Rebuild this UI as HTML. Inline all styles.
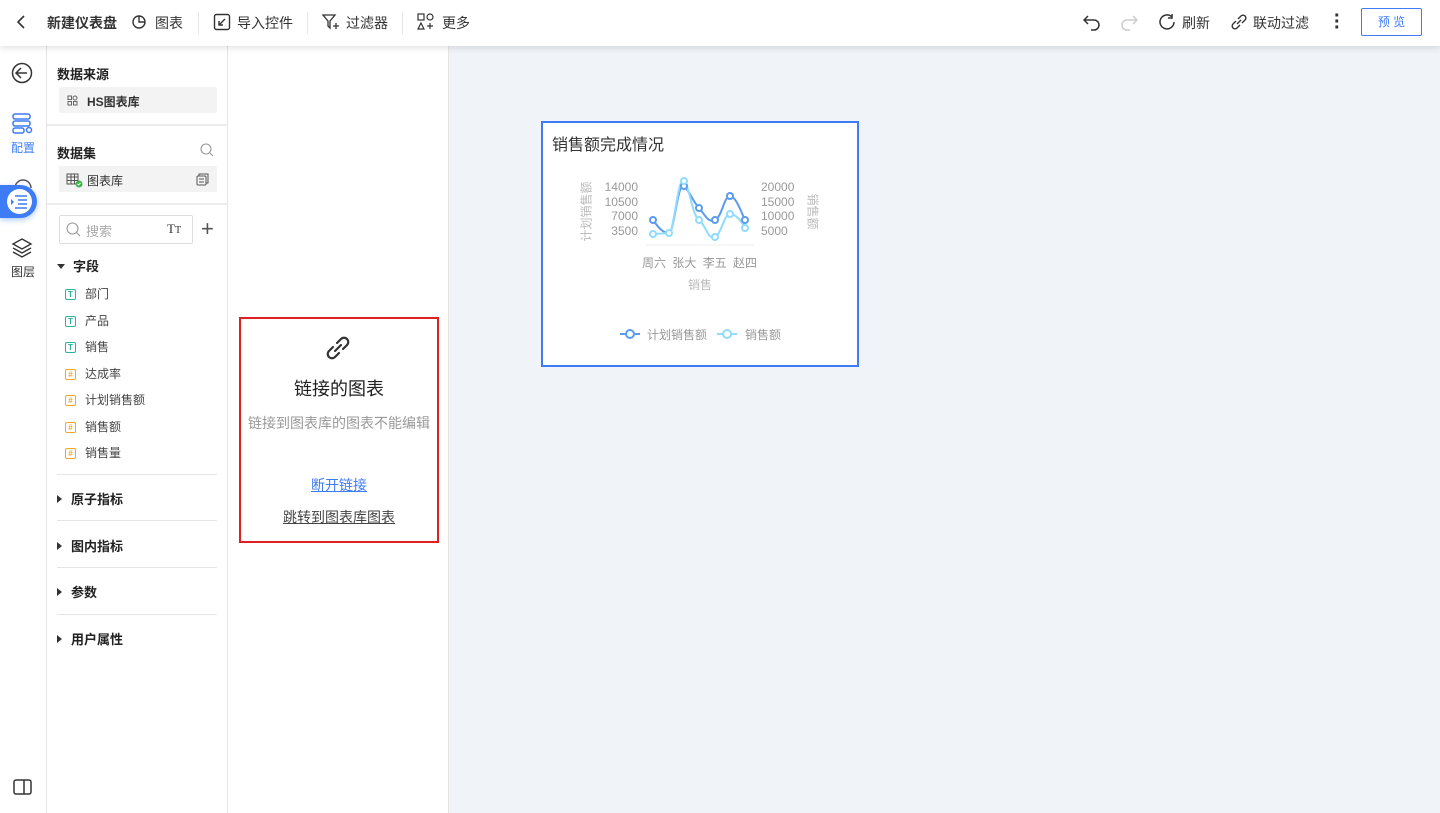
<!DOCTYPE html><html><head><meta charset="utf-8"><style>
*{box-sizing:border-box;margin:0;padding:0}
body{width:1440px;height:813px;overflow:hidden;font-family:"Liberation Sans","Noto Sans CJK SC",sans-serif;color:#333;background:#fff;position:relative;font-size:13px}
.a{position:absolute}
.top{left:0;top:0;width:1440px;height:46px;background:#fff;box-shadow:0 2px 6px rgba(0,0,0,.12);z-index:5}
.tb{top:13px;font-size:14px;color:#333;white-space:nowrap}
.sep{top:12px;width:1px;height:22px;background:#e6e6e6}
.hd{font-weight:bold;font-size:13px;color:#222}
.fld{left:65px;font-size:12px;color:#444}
.ti{display:inline-block;width:11px;height:11px;border:1px solid #2bb3a0;color:#2bb3a0;font-size:8px;line-height:9px;text-align:center;border-radius:2px;margin-right:9px;vertical-align:1px;font-weight:bold}
.tn{border-color:#f5a623;color:#f5a623}
.line{left:57px;width:160px;height:1px;background:#e5e5e5}
.grp{left:57px;font-weight:bold;font-size:13px;color:#222}
.grp:before{content:"";display:inline-block;border-left:5px solid #333;border-top:4px solid transparent;border-bottom:4px solid transparent;margin-right:9px;vertical-align:1px}
.grp.open:before{border-top:5px solid #333;border-left:4px solid transparent;border-right:4px solid transparent;border-bottom:0;margin-right:8px;vertical-align:2px}
.ax{font-size:12px;color:#999}
</style></head><body>
<div class="a top">
<svg class="a" style="left:14px;top:14px" width="14" height="16"><path d="M10 2L4 8l6 6" stroke="#333" stroke-width="1.6" fill="none"/></svg>
<div class="a tb" style="left:47px;font-weight:bold">新建仪表盘</div>
<svg class="a" style="left:131px;top:14px" width="17" height="17"><circle cx="8" cy="8" r="6" stroke="#333" stroke-width="1.4" fill="none"/><path d="M8 2v6h6" stroke="#333" stroke-width="1.4" fill="none"/></svg>
<div class="a tb" style="left:155px">图表</div>
<div class="a sep" style="left:198px"></div>
<svg class="a" style="left:213px;top:13px" width="18" height="18"><rect x="1.5" y="1.5" width="15" height="15" rx="2" stroke="#333" stroke-width="1.4" fill="none"/><path d="M12 6l-6 6M6 8v4h4" stroke="#333" stroke-width="1.4" fill="none"/></svg>
<div class="a tb" style="left:237px">导入控件</div>
<div class="a sep" style="left:307px"></div>
<svg class="a" style="left:322px;top:13px" width="18" height="18"><path d="M1 2h12l-5 6v7l-2-2V8z" stroke="#333" stroke-width="1.3" fill="none"/><path d="M14 10v6M11 13h6" stroke="#333" stroke-width="1.3"/></svg>
<div class="a tb" style="left:346px">过滤器</div>
<div class="a sep" style="left:402px"></div>
<svg class="a" style="left:417px;top:13px" width="18" height="18"><rect x="1" y="1" width="6" height="6" stroke="#333" stroke-width="1.2" fill="none"/><circle cx="13" cy="4" r="3" stroke="#333" stroke-width="1.2" fill="none"/><path d="M4 10l3 6H1z" stroke="#333" stroke-width="1.2" fill="none"/><path d="M13 10v6M10 13h6" stroke="#333" stroke-width="1.2"/></svg>
<div class="a tb" style="left:442px">更多</div>
<svg class="a" style="left:1083px;top:13px" width="18" height="18"><path d="M5 3L1 7l4 4M1 7h10a5 5 0 010 10H8" stroke="#333" stroke-width="1.5" fill="none"/></svg>
<svg class="a" style="left:1120px;top:13px" width="18" height="18"><path d="M13 3l4 4-4 4M17 7H7a5 5 0 000 10h3" stroke="#ccc" stroke-width="1.5" fill="none"/></svg>
<svg class="a" style="left:1159px;top:13px" width="18" height="18"><path d="M15 9a7 7 0 11-2-5M13 1v4h-4" stroke="#333" stroke-width="1.5" fill="none"/></svg>
<div class="a tb" style="left:1182px">刷新</div>
<svg class="a" style="left:1230px;top:13px" width="18" height="18"><path d="M7 11l4-4M6 8l-3 3a2.8 2.8 0 004 4l3-3M12 10l3-3a2.8 2.8 0 00-4-4L8 6" stroke="#333" stroke-width="1.4" fill="none"/></svg>
<div class="a tb" style="left:1253px">联动过滤</div>
<div class="a" style="left:1334px;top:13px;width:4px;line-height:6px;font-size:20px;font-weight:bold">·<br>·<br>·</div>
<div class="a" style="left:1361px;top:8px;width:61px;height:28px;border:1px solid #3d7cf5;border-radius:2px;color:#3d7cf5;font-size:12px;text-align:center;line-height:26px">预 览</div>
</div>

<div class="a" style="left:46px;top:46px;width:1px;height:767px;background:#e5e5e5"></div>
<svg class="a" style="left:11px;top:62px" width="22" height="22"><circle cx="11" cy="11" r="9.5" stroke="#333" stroke-width="1.5" fill="none"/><path d="M10 6l-5 5 5 5M5 11h11" stroke="#333" stroke-width="1.5" fill="none"/></svg>
<svg class="a" style="left:12px;top:113px" width="22" height="22"><rect x="1" y="1" width="17" height="5" rx="2" stroke="#3d7cf5" stroke-width="1.5" fill="none"/><rect x="1" y="8" width="17" height="5" rx="2" stroke="#3d7cf5" stroke-width="1.5" fill="none"/><rect x="1" y="15" width="11" height="5" rx="2" stroke="#3d7cf5" stroke-width="1.5" fill="none"/><circle cx="17" cy="17" r="2.5" stroke="#3d7cf5" stroke-width="1.5" fill="none"/></svg>
<div class="a" style="left:11px;top:139px;font-size:12px;color:#3d7cf5">配置</div>
<svg class="a" style="left:13px;top:176px" width="20" height="12"><path d="M2 12a8 8 0 0116 0" stroke="#555" stroke-width="1.5" fill="none"/></svg>
<div class="a" style="left:0;top:185px;width:37px;height:33px;background:#3d7cf5;border-radius:0 17px 17px 0;box-shadow:0 2px 6px rgba(61,124,245,.4)"></div>
<div class="a" style="left:7px;top:189px;width:25px;height:25px;border-radius:50%;background:#fff"></div>
<svg class="a" style="left:10px;top:195px" width="18" height="14"><path d="M5 1h12M8 5h9M8 9h9M5 13h12" stroke="#3d7cf5" stroke-width="1.4"/><path d="M1 4l3 3-3 3z" fill="#3d7cf5"/></svg>
<svg class="a" style="left:11px;top:237px" width="22" height="22"><path d="M11 2l9 5-9 5-9-5z M2 11l9 5 9-5M2 15l9 5 9-5" stroke="#333" stroke-width="1.4" fill="none"/></svg>
<div class="a" style="left:11px;top:263px;font-size:12px">图层</div>
<svg class="a" style="left:13px;top:779px" width="20" height="17"><rect x="1" y="1" width="17" height="14" rx="2" stroke="#333" stroke-width="1.5" fill="none"/><path d="M11 1v14" stroke="#333" stroke-width="1.5"/></svg>

<div class="a" style="left:227px;top:46px;width:1px;height:767px;background:#e5e5e5"></div>
<div class="a hd" style="left:57px;top:64px">数据来源</div>
<div class="a" style="left:59px;top:87px;width:158px;height:26px;background:#f3f3f3;border-radius:2px"></div>
<svg class="a" style="left:67px;top:95px" width="11" height="11"><g stroke="#666" fill="none"><rect x="1" y="1" width="3.5" height="3.5"/><circle cx="8" cy="3" r="2"/><rect x="1" y="6.5" width="3.5" height="3.5"/><rect x="6.5" y="6.5" width="3.5" height="3.5"/></g></svg>
<div class="a" style="left:87px;top:93px;font-size:12px;font-weight:bold">HS图表库</div>
<div class="a line" style="left:47px;width:180px;top:124px;height:2px;background:#ececec"></div>
<div class="a hd" style="left:57px;top:143px">数据集</div>
<svg class="a" style="left:200px;top:143px" width="14" height="14"><circle cx="6" cy="6" r="5" stroke="#999" stroke-width="1.1" fill="none"/><path d="M10 10l3 3" stroke="#999" stroke-width="1.1"/></svg>
<div class="a" style="left:59px;top:166px;width:158px;height:26px;background:#f3f3f3"></div>
<svg class="a" style="left:66px;top:173px" width="18" height="16"><rect x="1" y="1" width="11" height="10" stroke="#555" fill="none"/><path d="M1 4h11M1 7.5h11M5 1v10M8.5 1v10" stroke="#555"/><circle cx="13" cy="11" r="3.5" fill="#3bb34a"/><path d="M11.5 11l1 1 2-2" stroke="#fff" fill="none"/></svg>
<div class="a" style="left:87px;top:172px;font-size:12px">图表库</div>
<svg class="a" style="left:196px;top:173px" width="13" height="13"><rect x="1" y="3" width="9" height="9" rx="1" stroke="#555" fill="none"/><path d="M3 3V1h9v9h-2M3 6h5M3 9h5" stroke="#555" fill="none"/></svg>
<div class="a line" style="left:47px;width:180px;top:203px;height:2px;background:#ececec"></div>
<div class="a" style="left:59px;top:215px;width:134px;height:29px;border:1px solid #ddd;border-radius:2px"></div>
<svg class="a" style="left:66px;top:222px" width="15" height="15"><circle cx="6.5" cy="6.5" r="5.5" stroke="#999" stroke-width="1.1" fill="none"/><path d="M10.5 10.5l3.5 3.5" stroke="#999" stroke-width="1.1"/></svg>
<div class="a" style="left:86px;top:221px;font-size:13px;color:#aaa">搜索</div>
<div class="a" style="left:167px;top:221px;font-size:13px;font-family:'Liberation Serif',serif">T<span style="font-size:10px">T</span></div>
<div class="a" style="left:201px;top:216px;font-size:22px;font-weight:300;color:#555">+</div>
<div class="a grp open" style="top:256px">字段</div>
<div class="a fld" style="top:285px"><span class="ti">T</span>部门</div>
<div class="a fld" style="top:312px"><span class="ti">T</span>产品</div>
<div class="a fld" style="top:338px"><span class="ti">T</span>销售</div>
<div class="a fld" style="top:365px"><span class="ti tn">#</span>达成率</div>
<div class="a fld" style="top:391px"><span class="ti tn">#</span>计划销售额</div>
<div class="a fld" style="top:418px"><span class="ti tn">#</span>销售额</div>
<div class="a fld" style="top:444px"><span class="ti tn">#</span>销售量</div>
<div class="a line" style="top:474px"></div>
<div class="a grp" style="top:489px">原子指标</div>
<div class="a line" style="top:520px"></div>
<div class="a grp" style="top:536px">图内指标</div>
<div class="a line" style="top:567px"></div>
<div class="a grp" style="top:582px">参数</div>
<div class="a line" style="top:614px"></div>
<div class="a grp" style="top:629px">用户属性</div>

<div class="a" style="left:239px;top:317px;width:200px;height:226px;border:2px solid #e02020"></div>
<svg class="a" style="left:322px;top:332px" width="32" height="32"><g stroke="#333" stroke-width="2.2" fill="none" stroke-linecap="round"><path d="M13 19l6-6"/><path d="M11 15l-4 4a4.2 4.2 0 006 6l4-4"/><path d="M21 17l4-4a4.2 4.2 0 00-6-6l-4 4"/></g></svg>
<div class="a" style="left:239px;width:200px;top:375px;text-align:center;font-size:18px;color:#222">链接的图表</div>
<div class="a" style="left:239px;width:200px;top:413px;text-align:center;font-size:14px;color:#999">链接到图表库的图表不能编辑</div>
<div class="a" style="left:239px;width:200px;top:475px;text-align:center;font-size:14px;color:#3d7cf5;text-decoration:underline">断开链接</div>
<div class="a" style="left:239px;width:200px;top:507px;text-align:center;font-size:14px;color:#444;text-decoration:underline">跳转到图表库图表</div>

<div class="a" style="left:448px;top:46px;width:992px;height:767px;background:#f0f4f8;border-left:1px solid #e5e5e5"></div>
<div class="a" style="left:541px;top:121px;width:318px;height:246px;background:#fff;border:2px solid #3d7cf5"></div>
<div class="a" style="left:552px;top:131px;font-size:16px;color:#333">销售额完成情况</div>
<div class="a" style="left:556px;top:203px;width:60px;text-align:center;transform:rotate(-90deg);font-size:12px;color:#bbb">计划销售额</div>
<div class="a" style="left:783px;top:203px;width:60px;text-align:center;transform:rotate(90deg);font-size:12px;color:#bbb">销售额</div>
<div class="a ax" style="left:598px;top:180px;width:40px;text-align:right;line-height:14.5px">14000<br>10500<br>7000<br>3500</div>
<div class="a ax" style="left:761px;top:180px;line-height:14.5px">20000<br>15000<br>10000<br>5000</div>
<div class="a ax" style="left:642px;top:254px;word-spacing:3px">周六 张大 李五 赵四</div>
<div class="a ax" style="left:688px;top:276px;color:#bbb">销售</div>
<svg class="a" style="left:640px;top:170px" width="120" height="80"><path d="M6 75H114" stroke="#eee"/>
<path d="M13 50C20 60 24 63 29 63S38 10 44 16 52 30 59 38 68 53 75 50 84 26 90 26 102 44 105 50" stroke="#5b9bef" stroke-width="2" fill="none"/>
<path d="M13 64C20 64 24 63 29 63S38 4 44 11 52 45 59 50 68 71 75 67 84 44 90 44 102 52 105 58" stroke="#8fdcff" stroke-width="2" fill="none"/>
<g fill="#fff" stroke="#5b9bef" stroke-width="2"><circle cx="13" cy="50" r="3"/><circle cx="44" cy="16" r="3"/><circle cx="59" cy="38" r="3"/><circle cx="75" cy="50" r="3"/><circle cx="90" cy="26" r="3"/><circle cx="105" cy="50" r="3"/></g>
<g fill="#fff" stroke="#8fdcff" stroke-width="2"><circle cx="13" cy="64" r="3"/><circle cx="29" cy="63" r="3"/><circle cx="44" cy="11" r="3"/><circle cx="59" cy="50" r="3"/><circle cx="75" cy="67" r="3"/><circle cx="90" cy="44" r="3"/><circle cx="105" cy="58" r="3"/></g></svg>
<svg class="a" style="left:619px;top:327px" width="130" height="14"><path d="M1 7h20" stroke="#5b9bef" stroke-width="2"/><circle cx="11" cy="7" r="4" fill="#fff" stroke="#5b9bef" stroke-width="2"/><path d="M98 7h20" stroke="#8fdcff" stroke-width="2"/><circle cx="108" cy="7" r="4" fill="#fff" stroke="#8fdcff" stroke-width="2"/></svg>
<div class="a ax" style="left:647px;top:326px">计划销售额</div>
<div class="a ax" style="left:745px;top:326px">销售额</div>
</body></html>
